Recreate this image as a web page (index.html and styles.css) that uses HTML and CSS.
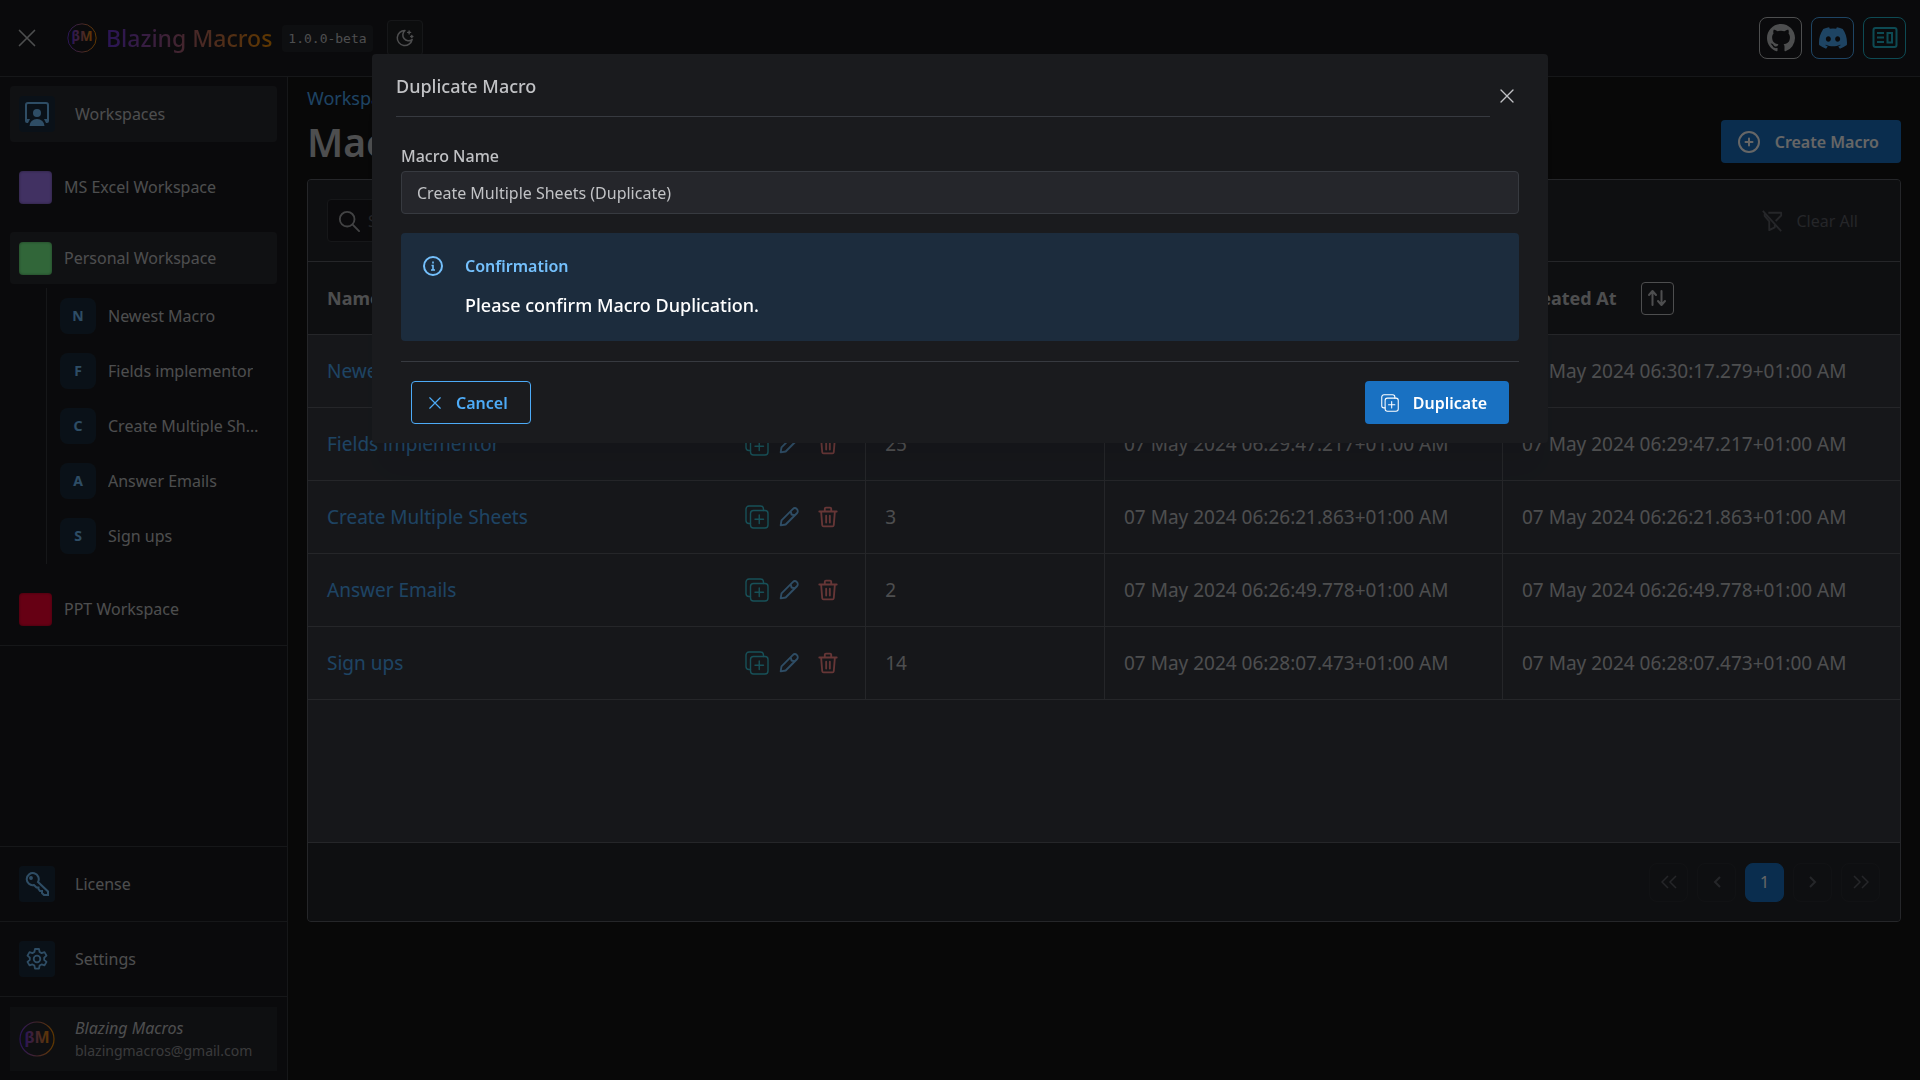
FILE: index.html
```html
<!DOCTYPE html>
<html lang="en">
<head>
<meta charset="utf-8">
<title>Blazing Macros</title>
<link rel="stylesheet" href="styles.css">
</head>
<body>
<svg class="sprite" aria-hidden="true">
  <defs>
    <linearGradient id="brand" x1="0" x2="1" y1="0" y2="0"><stop offset="0" stop-color="#6a35d8"/><stop offset="1" stop-color="#f08c00"/></linearGradient>
    <symbol id="i-x" viewBox="0 0 24 24"><path d="M3 3l18 18M21 3L3 21" fill="none" stroke="currentColor" stroke-width="2" stroke-linecap="round"/></symbol>
    <symbol id="i-copy" viewBox="0 0 24 24"><g fill="none" stroke="currentColor" stroke-width="1.4" stroke-linecap="round"><rect x="5.5" y="5.5" width="17.5" height="17.5" rx="3"/><path d="M5.500 18.500h-1.500a3 3 0 0 1-3-3V4a3 3 0 0 1 3-3h11.500a3 3 0 0 1 3 3v1.500M14.250 10v8.500M10 14.250h8.500"/></g></symbol>
    <symbol id="i-pen" viewBox="0 0 24 24"><g fill="none" stroke="currentColor" stroke-width="2.2" stroke-linejoin="round"><path d="M2 22l1-6L16.500 2.500a3 3 0 0 1 5 5L8 21l-6 1zM14 5l1 4 4 1"/></g></symbol>
    <symbol id="i-trash" viewBox="0 0 24 24"><g fill="none" stroke="currentColor" stroke-width="2" stroke-linecap="round" stroke-linejoin="round"><path d="M2.500 6h19M4.500 6l1.200 15a1.500 1.500 0 0 0 1.500 1.300h9.600a1.500 1.500 0 0 0 1.500-1.300L19.500 6M8.500 6V3a1.300 1.300 0 0 1 1.300-1.300h4.400A1.300 1.300 0 0 1 15.500 3v3M10 10.500v7.500M14 10.500v7.500"/></g></symbol>
    <symbol id="logo" viewBox="0 0 36 36"><circle cx="18" cy="18" r="17" fill="none" stroke="url(#brand)" stroke-width="1.200"/><text x="18" y="22" text-anchor="middle" font-size="16" font-weight="700" fill="url(#brand)">βM</text><path d="M8 27h20" stroke="url(#brand)" stroke-width="1.500" stroke-dasharray="2 1"/></symbol>
  </defs>
</svg>

<header class="topbar">
  <button class="burger" aria-label="Close navigation"><svg width="20" height="20"><use href="#i-x"/></svg></button>
  <svg class="brand-logo" width="30" height="30"><use href="#logo"/></svg>
  <span class="brand-name">Blazing Macros</span>
  <code class="version">1.0.0-beta</code>
  <button class="theme" aria-label="Toggle color scheme"><svg width="18" height="18" viewBox="0 0 24 24" fill="none" stroke="currentColor" stroke-width="2" stroke-linejoin="round" stroke-linecap="round"><path d="M12 2a7.500 7.500 0 0 0 9.500 12A10 10 0 1 1 12 2z"/><path d="M17.500 2.500v4M15.500 4.500h4M21 8.500v3M19.500 10h3" stroke-width="1.800"/></svg></button>
  <nav class="socials" aria-label="Links">
    <a href="#github" class="social github" aria-label="GitHub"><svg width="28" height="28" viewBox="0 0 16 16" fill="currentColor"><path d="M8 0C3.580 0 0 3.580 0 8c0 3.540 2.290 6.530 5.470 7.590.4.070.55-.17.55-.38 0-.19-.01-.82-.01-1.490-2.010.37-2.530-.49-2.690-.94-.09-.23-.48-.94-.82-1.130-.28-.15-.68-.52-.01-.53.63-.01 1.080.58 1.230.82.72 1.210 1.870.87 2.330.66.070-.52.28-.87.51-1.070-1.780-.2-3.640-.89-3.640-3.950 0-.87.31-1.590.82-2.150-.08-.2-.36-1.020.08-2.120 0 0 .67-.21 2.200.82a7.600 7.600 0 0 1 4 0c1.530-1.040 2.200-.82 2.200-.82.44 1.100.16 1.920.08 2.120.51.56.82 1.270.82 2.150 0 3.070-1.870 3.750-3.650 3.950.29.25.54.73.54 1.480 0 1.070-.01 1.930-.01 2.200 0 .21.15.46.55.38A8 8 0 0 0 16 8c0-4.420-3.580-8-8-8z"/></svg></a>
    <a href="#discord" class="social discord" aria-label="Discord"><svg width="28" height="28" viewBox="0 0 16 16" fill="currentColor"><path d="M13.545 2.907a13.200 13.200 0 0 0-3.257-1.011.05.05 0 0 0-.052.025c-.141.250-.297.577-.406.833a12.200 12.200 0 0 0-3.658 0 8 8 0 0 0-.412-.833.05.05 0 0 0-.052-.025c-1.125.194-2.220.534-3.257 1.011a.04.04 0 0 0-.021.018C.356 6.024-.213 9.047.066 12.032q.003.022.021.037a13.300 13.300 0 0 0 3.995 2.020.05.05 0 0 0 .056-.019q.463-.630.818-1.329a.05.05 0 0 0-.028-.070 9 9 0 0 1-1.248-.595.05.05 0 0 1-.005-.085l.248-.194a.05.05 0 0 1 .051-.007c2.619 1.196 5.454 1.196 8.041 0a.05.05 0 0 1 .053.007l.248.195a.05.05 0 0 1-.004.085 8 8 0 0 1-1.249.594.05.05 0 0 0-.027.070c.24.465.515.909.817 1.329a.05.05 0 0 0 .056.019 13.200 13.200 0 0 0 4.001-2.020.05.05 0 0 0 .021-.037c.334-3.451-.559-6.449-2.366-9.106a.03.03 0 0 0-.020-.019M5.347 10.214c-.789 0-1.438-.724-1.438-1.612s.637-1.613 1.438-1.613c.807 0 1.450.730 1.438 1.613 0 .888-.637 1.612-1.438 1.612m5.316 0c-.788 0-1.438-.724-1.438-1.612s.637-1.613 1.438-1.613c.807 0 1.451.730 1.438 1.613 0 .888-.631 1.612-1.438 1.612"/></svg></a>
    <a href="#news" class="social news" aria-label="News"><svg width="26" height="24" viewBox="0 0 26 24" fill="none" stroke="currentColor" stroke-width="2"><rect x="1.500" y="2" width="23" height="19" rx="2"/><path d="M5 7h7M5 11.500h7M5 16h7M15.500 7h4.500v9.500h-4.500z"/></svg></a>
  </nav>
</header>

<div class="shell">
  <aside class="sidebar">
    <section class="spaces">
      <a href="#workspaces" class="item active tall"><span class="tile"><svg width="24" height="24" viewBox="0 0 24 24" fill="currentColor"><path d="M1 19V3a2 2 0 0 1 2-2h18a2 2 0 0 1 2 2v16" fill="none" stroke="currentColor" stroke-width="2"/><path d="M0 17h5l-2 4H2a2 2 0 0 1-2-2zM19 17h5v2a2 2 0 0 1-2 2h-1z"/><circle cx="12" cy="11" r="4"/><path d="M4.500 24a7.500 7 0 0 1 15 0z"/></svg></span>Workspaces</a>
      <a href="#excel" class="item space"><span class="swatch violet"></span>MS Excel Workspace</a>
      <a href="#personal" class="item space active"><span class="swatch green"></span>Personal Workspace</a>
      <ul class="children">
        <li><a href="#m1"><span class="initial">N</span><span class="label">Newest Macro</span></a></li>
        <li><a href="#m2"><span class="initial">F</span><span class="label">Fields implementor</span></a></li>
        <li><a href="#m3"><span class="initial">C</span><span class="label">Create Multiple Sheets</span></a></li>
        <li><a href="#m4"><span class="initial">A</span><span class="label">Answer Emails</span></a></li>
        <li><a href="#m5"><span class="initial">S</span><span class="label">Sign ups</span></a></li>
      </ul>
      <a href="#ppt" class="item space"><span class="swatch red"></span>PPT Workspace</a>
    </section>
    <section class="foot">
      <a href="#license" class="item"><span class="tile"><svg width="24" height="24" viewBox="0 0 24 24" fill="none" stroke="currentColor" stroke-width="2"><path d="M13 10l10 9.500V23h-4l-2-2v-2h-2l-1.500-2v-1.500H11.500L9 13A6 6 0 1 1 13 10z"/><circle cx="6" cy="6" r="1.300" fill="currentColor" stroke-width="1.200"/></svg></span>License</a>
      <a href="#settings" class="item"><span class="tile"><svg width="24" height="24" viewBox="0 0 24 24" fill="none" stroke="currentColor" stroke-width="1.800" stroke-linejoin="round"><circle cx="12" cy="12" r="3.300"/><path d="M10 2h4l.6 3 2 1.100 2.900-1 2 3.500-2.300 2v2.300l2.300 2-2 3.500-2.900-1-2 1.200-.6 3h-4l-.6-3-2-1.200-2.900 1-2-3.500 2.300-2v-2.300l-2.300-2 2-3.500 2.900 1 2-1.100z"/></svg></span>Settings</a>
      <div class="account"><a href="#account" class="profile"><svg width="36" height="36"><use href="#logo"/></svg><span class="who"><em>Blazing Macros</em><small>blazingmacros@gmail.com</small></span></a></div>
    </section>
  </aside>

  <main class="content">
    <a class="crumb" href="#workspaces">Workspaces</a>
    <div class="heading">
      <h1>Macros</h1>
      <button class="btn filled create"><svg width="24" height="24" viewBox="0 0 24 24" fill="none" stroke="currentColor" stroke-width="2" stroke-linecap="round"><circle cx="12" cy="12" r="10"/><path d="M12 8.500v7M8.500 12h7"/></svg>Create Macro</button>
    </div>
    <div class="card">
      <div class="toolbar">
        <label class="search"><svg width="22" height="22" viewBox="0 0 24 24" fill="none" stroke="currentColor" stroke-width="2" stroke-linecap="round"><circle cx="10" cy="10" r="8"/><path d="M16 16l7 7"/></svg><input type="search" placeholder="Search" aria-label="Search"></label>
        <button class="clear" disabled><svg width="22" height="22" viewBox="0 0 24 24" fill="none" stroke="currentColor" stroke-width="2" stroke-linejoin="round"><path d="M8 3h14v3l-6 6M2 1l20 22M4 4v2.500l5 6V22l6-3v-4"/></svg>Clear All</button>
      </div>
      <table class="grid">
        <colgroup><col class="c-name"><col class="c-count"><col class="c-date"><col class="c-date"></colgroup>
        <thead><tr><th>Name</th><th>Actions</th><th>Updated At</th><th><span class="sort-head">Created At<button class="sort" aria-label="Sort by created date"><svg width="20" height="20" viewBox="0 0 20 20" fill="none" stroke="currentColor" stroke-width="2" stroke-linecap="round" stroke-linejoin="round"><path d="M5.500 17V4M2 7l3.500-4L9 7M14.500 3v13M11 13l3.500 4 3.500-4"/></svg></button></span></th></tr></thead>
        <tbody>
          <tr><td><div class="name"><a href="#m1">Newest Macro</a><span class="tools"><button class="dup" aria-label="Duplicate"><svg width="24" height="24"><use href="#i-copy"/></svg></button><button class="edit" aria-label="Edit"><svg width="20" height="20"><use href="#i-pen"/></svg></button><button class="del" aria-label="Delete"><svg width="22" height="22"><use href="#i-trash"/></svg></button></span></div></td><td>5</td><td>07 May 2024 06:30:17.279+01:00 AM</td><td>07 May 2024 06:30:17.279+01:00 AM</td></tr>
          <tr><td><div class="name"><a href="#m2">Fields implementor</a><span class="tools"><button class="dup" aria-label="Duplicate"><svg width="24" height="24"><use href="#i-copy"/></svg></button><button class="edit" aria-label="Edit"><svg width="20" height="20"><use href="#i-pen"/></svg></button><button class="del" aria-label="Delete"><svg width="22" height="22"><use href="#i-trash"/></svg></button></span></div></td><td>25</td><td>07 May 2024 06:29:47.217+01:00 AM</td><td>07 May 2024 06:29:47.217+01:00 AM</td></tr>
          <tr><td><div class="name"><a href="#m3">Create Multiple Sheets</a><span class="tools"><button class="dup" aria-label="Duplicate"><svg width="24" height="24"><use href="#i-copy"/></svg></button><button class="edit" aria-label="Edit"><svg width="20" height="20"><use href="#i-pen"/></svg></button><button class="del" aria-label="Delete"><svg width="22" height="22"><use href="#i-trash"/></svg></button></span></div></td><td>3</td><td>07 May 2024 06:26:21.863+01:00 AM</td><td>07 May 2024 06:26:21.863+01:00 AM</td></tr>
          <tr><td><div class="name"><a href="#m4">Answer Emails</a><span class="tools"><button class="dup" aria-label="Duplicate"><svg width="24" height="24"><use href="#i-copy"/></svg></button><button class="edit" aria-label="Edit"><svg width="20" height="20"><use href="#i-pen"/></svg></button><button class="del" aria-label="Delete"><svg width="22" height="22"><use href="#i-trash"/></svg></button></span></div></td><td>2</td><td>07 May 2024 06:26:49.778+01:00 AM</td><td>07 May 2024 06:26:49.778+01:00 AM</td></tr>
          <tr><td><div class="name"><a href="#m5">Sign ups</a><span class="tools"><button class="dup" aria-label="Duplicate"><svg width="24" height="24"><use href="#i-copy"/></svg></button><button class="edit" aria-label="Edit"><svg width="20" height="20"><use href="#i-pen"/></svg></button><button class="del" aria-label="Delete"><svg width="22" height="22"><use href="#i-trash"/></svg></button></span></div></td><td>14</td><td>07 May 2024 06:28:07.473+01:00 AM</td><td>07 May 2024 06:28:07.473+01:00 AM</td></tr>
        </tbody>
      </table>
      <div class="pager">
        <button disabled aria-label="First page"><svg width="16" height="14" viewBox="0 0 16 14"><path d="M7 1L1 7l6 6M15 1L9 7l6 6"/></svg></button>
        <button disabled aria-label="Previous page"><svg width="8" height="12" viewBox="0 0 8 12"><path d="M7 1L2 6l5 5" stroke-width="2"/></svg></button>
        <button class="current" aria-current="page">1</button>
        <button disabled aria-label="Next page"><svg width="8" height="12" viewBox="0 0 8 12"><path d="M1 1l5 5-5 5" stroke-width="2"/></svg></button>
        <button disabled aria-label="Last page"><svg width="16" height="14" viewBox="0 0 16 14"><path d="M1 1l6 6-6 6M9 1l6 6-6 6"/></svg></button>
      </div>
    </div>
  </main>
</div>

<div class="overlay">
  <form class="modal" role="dialog" aria-modal="true" aria-labelledby="modal-title">
    <div class="modal-head">
      <h2 id="modal-title">Duplicate Macro</h2>
      <button type="button" class="close" aria-label="Close"><svg width="16" height="16"><use href="#i-x"/></svg></button>
    </div>
    <div class="modal-body">
      <label class="field" for="macro-name">Macro Name</label>
      <input class="text" id="macro-name" type="text" value="Create Multiple Sheets (Duplicate)">
      <div class="alert" role="alert">
        <svg width="20" height="20" viewBox="0 0 20 20" fill="none" stroke="currentColor" stroke-width="2"><circle cx="10" cy="10" r="9"/><path d="M8.500 9.500H10V14M8 14h4M10 5.500v2" stroke-width="1.600"/></svg>
        <div><strong>Confirmation</strong><p>Please confirm Macro Duplication.</p></div>
      </div>
      <div class="actions">
        <button type="button" class="btn outline"><svg width="14" height="14"><use href="#i-x"/></svg>Cancel</button>
        <button type="submit" class="btn filled dupe"><svg width="18" height="18"><use href="#i-copy"/></svg>Duplicate</button>
      </div>
    </div>
  </form>
</div>
</body>
</html>
```
FILE: styles.css
```css
* { box-sizing: border-box; }

body {
  margin: 0;
  min-height: 100vh;
  display: flex;
  flex-direction: column;
  background: #141414;
  color: #c1c2c5;
  font: 16px/24px "Noto Sans", sans-serif;
}

a { color: inherit; text-decoration: none; }
button, input { font: inherit; color: inherit; }
button { padding: 0; border: 0; background: none; }
svg { display: block; flex: none; }
.sprite { position: absolute; width: 0; height: 0; }

/* Top bar */
.topbar {
  display: flex;
  align-items: center;
  height: 77px;
  padding: 0 14px 0 17px;
  background: #1a1b1e;
  border-bottom: 1px solid #373a40;
}
.brand-logo { margin: 0 9px 0 30px; }
.brand-name {
  font-size: 23px;
  line-height: 32px;
  font-weight: 500;
  background: linear-gradient(90deg, #6a35d8, #f08c00);
  background-clip: text;
  color: transparent;
}
.version {
  margin: 0 14px 0 10px;
  padding: 0 6px;
  border-radius: 4px;
  background: #25262b;
  font: 13px/27px "DejaVu Sans Mono", monospace;
}
.theme {
  display: grid;
  place-items: center;
  width: 36px;
  height: 36px;
  border: 1px solid #373a40;
  border-radius: 4px;
  background: #202125;
}
.socials { display: flex; gap: 9px; margin-left: auto; }
.social {
  display: grid;
  place-items: center;
  width: 43px;
  height: 42px;
  border: 1px solid;
  border-radius: 8px;
}
.github { color: #c1c2c5; }
.discord { color: #4dabf7; }
.news { color: #22b8cf; }

/* Sidebar */
.shell { flex: 1; display: flex; }
.sidebar {
  width: 288px;
  flex: none;
  display: flex;
  flex-direction: column;
  justify-content: space-between;
  background: #1a1b1e;
  border-right: 1px solid #373a40;
}
.spaces {
  display: flex;
  flex-direction: column;
  padding: 9px 10px 10px;
  border-bottom: 1px solid #373a40;
}
.item { display: flex; align-items: center; padding: 0 9px; border-radius: 4px; }
.item.active { background: #2a2b30; }
.item.tall { height: 56px; }
.space { height: 52px; margin-top: 19px; gap: 12px; }
.tile {
  display: grid;
  place-items: center;
  width: 36px;
  height: 36px;
  margin-right: 20px;
  border-radius: 4px;
  background: #1b2c3d;
  color: #74c0fc;
}
.swatch { width: 33px; height: 33px; border-radius: 4px; box-shadow: inset 0 0 3px #0006; }
.violet { background: #a37bf5; }
.green { background: #7bff90; }
.red { background: #ff0033; }
.children {
  list-style: none;
  margin: 4px 0 0 36px;
  padding: 0 0 1px 4px;
  border-left: 1px solid #373a40;
}
.children a { display: flex; align-items: center; gap: 12px; height: 55px; padding: 0 12px 0 9px; }
.initial {
  flex: none;
  width: 36px;
  border-radius: 8px;
  background: #1b2c3d;
  color: #74c0fc;
  font-size: 14px;
  line-height: 36px;
  font-weight: 700;
  text-align: center;
}
.label { overflow: hidden; text-overflow: ellipsis; white-space: nowrap; }
.foot .item { height: 75px; padding: 0 19px; border-top: 1px solid #373a40; border-radius: 0; }
.account { padding: 10px 10px 9px; border-top: 1px solid #373a40; }
.profile { display: flex; align-items: center; gap: 20px; height: 64px; padding: 0 9px; background: #25262b; }
.who { display: flex; flex-direction: column; }
.who small { font-size: 14px; line-height: 22px; color: #909296; }

/* Content */
.content { flex: 1; min-width: 0; padding: 7px 19px 19px; font-size: 18px; }
.crumb { color: #4dabf7; line-height: 28px; }
.heading { display: flex; align-items: center; justify-content: space-between; height: 67px; padding-bottom: 8px; }
h1 { margin: 0; font-size: 39px; line-height: 56px; font-weight: 600; }
.btn {
  display: inline-flex;
  align-items: center;
  height: 43px;
  padding: 0 22px 0 16px;
  gap: 14px;
  border-radius: 4px;
  font-size: 16px;
  font-weight: 600;
}
.filled { background: #1971c2; color: #fff; }
.outline { border: 1px solid #4dabf7; color: #4dabf7; }
.card {
  display: flex;
  flex-direction: column;
  min-height: 743px;
  border: 1px solid #5c5f66;
  border-radius: 4px;
  background: #373a43;
  overflow: hidden;
}
.toolbar {
  display: flex;
  align-items: center;
  justify-content: space-between;
  height: 82px;
  padding: 0 42px 0 19px;
  background: #25262b;
  border-bottom: 1px solid #5c5f66;
}
.search {
  display: flex;
  align-items: center;
  gap: 6px;
  width: 300px;
  height: 43px;
  padding: 0 10px;
  border: 1px solid #373a40;
  border-radius: 4px;
  background: #1a1b1e;
  color: #a6a7ab;
}
.search input { min-width: 0; flex: 1; border: 0; background: none; outline: 0; font-size: 16px; }
.search input::placeholder { color: #5c5f66; }
.clear { display: flex; align-items: center; gap: 14px; color: #5c5f66; font-size: 16px; }
.grid { width: 100%; table-layout: fixed; border-collapse: separate; border-spacing: 0; }
.c-name { width: 35%; }
.c-count { width: 15%; }
.c-date { width: 25%; }
.grid th, .grid td { height: 73px; padding: 0 19px; text-align: left; border-bottom: 1px solid #5c5f66; white-space: nowrap; }
.grid th { background: #25262b; font-size: 18px; }
.grid td { font-size: 19px; }
.grid td + td { border-left: 1px solid #5c5f66; }
.sort-head { display: flex; align-items: center; gap: 24px; }
.sort { display: grid; place-items: center; width: 33px; height: 33px; border: 1px solid #c1c2c5; border-radius: 4px; }
.name { display: flex; align-items: center; justify-content: space-between; color: #4dabf7; }
.tools { display: flex; align-items: center; gap: 10px; padding-right: 7px; }
.tools .del { margin-left: 8px; }
.dup { color: #3bc9db; }
.edit { color: #74c0fc; }
.del { color: #ff8787; }
.pager {
  display: flex;
  align-items: center;
  justify-content: flex-end;
  gap: 9px;
  height: 79px;
  margin-top: auto;
  padding: 0 20px 0 19px;
  background: #25262b;
  border-top: 1px solid #5c5f66;
}
.pager button {
  display: grid;
  place-items: center;
  width: 39px;
  height: 39px;
  border: 1px solid #2c2e33;
  border-radius: 8px;
  color: #5c5f66;
  font-size: 16px;
}
.pager .current { background: #1971c2; border-color: #1971c2; color: #fff; }
.pager svg { fill: none; stroke: currentColor; stroke-width: 1.5; }

/* Modal */
.overlay {
  position: fixed;
  inset: 0;
  display: flex;
  align-items: flex-start;
  justify-content: center;
  padding: 5vh 16px;
  background: rgba(0, 0, 0, .6);
}
.modal {
  width: 100%;
  max-width: 1176px;
  padding: 13px 24px 19px;
  border-radius: 4px;
  background: #1a1b1e;
  box-shadow: 0 36px 28px -7px #0000000d, 0 17px 17px -7px #0000000a;
}
.modal-head { display: flex; align-items: flex-end; }
.modal-head h2 {
  flex: 1;
  margin: 0;
  padding: 5px 0 16px;
  border-bottom: 1px solid #373a40;
  font-size: 18px;
  line-height: 28px;
  font-weight: 500;
}
.close { display: grid; place-items: center; width: 34px; height: 42px; }
.modal-body { display: flex; flex-direction: column; padding: 27px 5px 0; }
.field { font-weight: 500; padding-bottom: 3px; }
.text {
  width: 100%;
  height: 43px;
  padding: 0 15px;
  border: 1px solid #373a40;
  border-radius: 4px;
  background: #25262b;
  outline: 0;
}
.alert {
  display: flex;
  gap: 22px;
  margin: 19px 0 20px;
  padding: 20px 22px;
  border-radius: 4px;
  background: #1c2c3d;
  color: #74c0fc;
}
.alert svg { margin-top: 3px; }
.alert strong { display: block; line-height: 26px; font-weight: 600; }
.alert p { margin: 10px 0 0; color: #fff; font-size: 18px; line-height: 32px; font-weight: 500; }
.actions { display: flex; justify-content: space-between; padding: 19px 10px 0; border-top: 1px solid #373a40; }
```
